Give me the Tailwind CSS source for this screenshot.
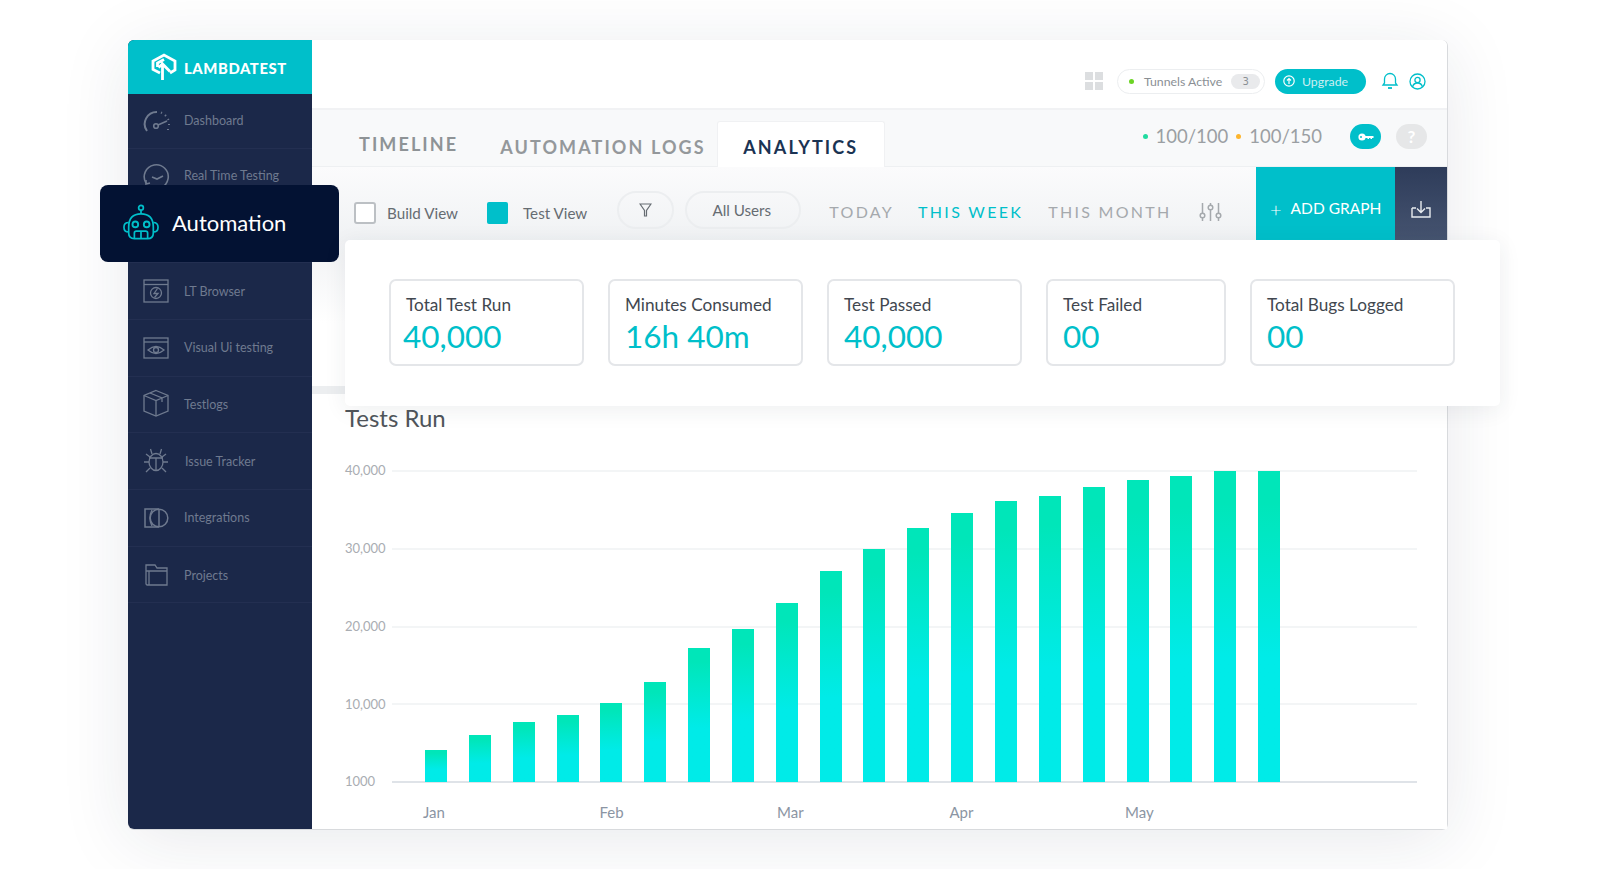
<!DOCTYPE html>
<html lang="en">
<head>
  <meta charset="UTF-8">
  <title>LambdaTest Analytics</title>
  <script src="https://cdn.jsdelivr.net/npm/@tailwindcss/browser@4"></script>
</head>
<body class="bg-white font-['Lato','Open_Sans',sans-serif] overflow-hidden">
<div class="w-[1600px] h-[869px] pt-[40px] pl-[128px]">
  <div class="relative flex w-[1320px] h-[790px] rounded-[6px] bg-white border-r border-b border-[#d8dadd] shadow-[0_10px_70px_rgba(30,40,70,0.10)]">

    <!-- Sidebar -->
    <aside class="w-[184px] shrink-0 bg-[#1b2849] rounded-l-[6px] flex flex-col text-[#6f7a8f] text-[12.5px]">
      <div class="h-[54px] bg-[#00bfca] rounded-tl-[6px] flex items-center pl-[23px] gap-[7px] text-white">
        <svg width="26" height="28" viewBox="0 0 26 28" fill="none" stroke="white" stroke-width="2.800"><path d="M9 20 L2 16.500 V8 L13 2 L24 8 V17 L19 20"/><path d="M6.500 14 V10 L13 6.500"/><path d="M11.500 27 V11 L19 18.500 M11.500 11 L7.500 14.500"/></svg>
        <span class="font-black text-[14.800px] tracking-[0.6px] mt-[2px]">LAMBDATEST</span>
      </div>
      <a class="h-[55px] flex items-center gap-[13px] pl-[15px] border-b border-[#232f51]">
        <svg width="28" height="26" viewBox="0 0 28 26" fill="none" stroke="#6f7a8f" stroke-width="1.6"><path d="M4 23 A12 12 0 0 1 14 4" stroke-width="2"/><path d="M18 4.500 L19 5 M22 7 L23 8 M25 11 L25.500 12 M26 16 L26 17 M25 21 L25 22" stroke-width="2"/><circle cx="13" cy="18" r="2.300"/><path d="M15 17 L24 13"/></svg>
        <span>Dashboard</span>
      </a>
      <a class="h-[57px] flex items-center gap-[13px] pl-[15px] border-b border-[#232f51]">
        <svg width="28" height="28" viewBox="0 0 28 28" fill="none" stroke="#6f7a8f" stroke-width="1.6"><path d="M3 20 A12 12 0 1 1 7 24"/><path d="M3 17 L3 21 L7 20"/><path d="M9 14 L14 16 L20 13"/></svg>
        <span class="mb-[2px]">Real Time Testing</span>
      </a>
      <div class="h-[57px] border-b border-[#232f51]"></div>
      <a class="h-[57px] flex items-center gap-[15px] pl-[15px] border-b border-[#232f51]">
        <svg width="26" height="26" viewBox="0 0 26 26" fill="none" stroke="#6f7a8f" stroke-width="1.300"><rect x="1" y="2" width="24" height="22"/><path d="M1 6.500 H25"/><circle cx="13" cy="15" r="5.500"/><path d="M14.500 10.500 L11 15.500 H15 L11.500 19.500"/></svg>
        <span class="mt-[2px]">LT Browser</span>
      </a>
      <a class="h-[57px] flex items-center gap-[15px] pl-[15px] border-b border-[#232f51]">
        <svg width="26" height="22" viewBox="0 0 26 22" fill="none" stroke="#6f7a8f" stroke-width="1.300"><rect x="1" y="1" width="24" height="20"/><path d="M1 5 H25"/><path d="M5 13 Q13 6 21 13 Q13 20 5 13Z"/><circle cx="13" cy="13" r="2.500"/></svg>
        <span>Visual Ui testing</span>
      </a>
      <a class="h-[56px] flex items-center gap-[15px] pl-[15px] border-b border-[#232f51]">
        <svg class="mb-[3px]" width="26" height="28" viewBox="0 0 26 28" fill="none" stroke="#6f7a8f" stroke-width="1.300"><path d="M13 1.500 L25 6.500 V22 L13 27 L1 22 V6.500Z"/><path d="M1 6.500 L13 11.500 L25 6.500 M13 11.500 V27 M7 4 L19 9 V13"/></svg>
        <span class="mt-[2px]">Testlogs</span>
      </a>
      <a class="h-[57px] flex items-center gap-[16px] pl-[15px] border-b border-[#232f51]">
        <svg class="mb-[3px]" width="26" height="26" viewBox="0 0 26 26" fill="none" stroke="#6f7a8f" stroke-width="1.300"><ellipse cx="13" cy="15" rx="7" ry="8.500"/><path d="M13 11 V23 M6 11 H20 M9 7 L7.500 2 M17 7 L18.500 2 M6 15 H1 M20 15 H25 M7 21 L3 25 M19 21 L23 25 M7 10 L3 7 M19 10 L23 7"/></svg>
        <span class="mt-[2px]">Issue Tracker</span>
      </a>
      <a class="h-[57px] flex items-center gap-[15px] pl-[15px] border-b border-[#232f51]">
        <svg width="26" height="20" viewBox="0 0 26 20" fill="none" stroke="#6f7a8f" stroke-width="1.500"><path d="M16 1 H2 V19 H16"/><circle cx="16" cy="10" r="8.800"/><path d="M9 2 Q5 10 9 18 M16 1 V19"/></svg>
        <span>Integrations</span>
      </a>
      <a class="h-[56px] flex items-center gap-[15px] pl-[15px] border-b border-[#232f51]">
        <svg width="26" height="24" viewBox="0 0 26 24" fill="none" stroke="#6f7a8f" stroke-width="1.300"><path d="M3 21 V2 H12 L14 5 H24 V22 H4 Z"/><path d="M3 8 H24 M6 8 V22"/></svg>
        <span class="mt-[4px]">Projects</span>
      </a>
    </aside>

    <!-- Main -->
    <main class="flex-1 flex flex-col min-w-0">
      <div class="h-[70px] shrink-0 bg-white rounded-tr-[6px] border-b-2 border-[#f1f2f4] flex items-center justify-end pt-[14px] pr-[21px]">
        <svg width="18" height="18" viewBox="0 0 18 18" fill="#dcdee0"><rect width="8" height="8"/><rect x="10" width="8" height="8"/><rect y="10" width="8" height="8"/><rect x="10" y="10" width="8" height="8"/></svg>
        <div class="ml-[14px] w-[148px] h-[25px] rounded-full border border-[#eceef0] flex items-center pl-[11px] text-[12.300px] text-[#8a8f94]">
          <span class="w-[5px] h-[5px] rounded-full bg-[#6bd424]"></span>
          <span class="ml-[10px] mt-[2px]">Tunnels Active</span>
          <span class="ml-[9px] w-[29px] h-[15px] rounded-full bg-[#e9eaec] text-[10px] text-center leading-[15px] font-['DejaVu_Sans']">3</span>
        </div>
        <div class="ml-[10px] w-[91px] h-[25px] rounded-full bg-[#00bfca] flex items-center pl-[8px] text-[12.300px] text-[#cdeff2]">
          <svg width="12" height="12" viewBox="0 0 12 12" fill="none" stroke="white" stroke-width="1.200"><circle cx="6" cy="6" r="5.200"/><path d="M6 9 V3.500 M4 5.500 L6 3.500 L8 5.500"/></svg>
          <span class="ml-[7px] mt-[2px]">Upgrade</span>
        </div>
        <svg class="ml-[15px]" width="18" height="18" viewBox="0 0 18 18" fill="none" stroke="#00bfca" stroke-width="1.300"><path d="M2 13 H16 L14.500 11 V7 A5.500 5.500 0 0 0 3.500 7 V11Z"/><path d="M7 16 H11" stroke-width="1.800"/><path d="M9 1 V2"/></svg>
        <svg class="ml-[10px]" width="17" height="17" viewBox="0 0 17 17" fill="none" stroke="#00bfca" stroke-width="1.300"><circle cx="8.500" cy="8.500" r="7.500"/><circle cx="8.500" cy="7" r="2.600"/><path d="M3.500 14 Q4.500 10 8.500 10 Q12.500 10 13.500 14"/></svg>
      </div>

      <div class="h-[57px] shrink-0 bg-[#f8f9fa] flex items-end border-b border-[#eef0f2] pl-[47px] pr-[20px]">
        <span class="font-bold text-[18px] tracking-[2.100px] text-[#8e9396] self-start mt-[21px]">TIMELINE</span>
        <span class="ml-[42px] font-bold text-[18px] tracking-[2.100px] text-[#94989b] self-start mt-[24px]">AUTOMATION LOGS</span>
        <span class="ml-[11px] w-[168px] h-[46px] bg-white rounded-t-[3px] border border-b-0 border-[#f0f1f3] pt-[6px] font-bold text-[18px] tracking-[2.100px] text-[#1a3353] flex items-center justify-center mb-[-1px]">ANALYTICS</span>
        <div class="ml-auto self-start mt-[13px] flex items-center text-[18.500px] text-[#9b9fa3]">
          <span class="w-[5px] h-[5px] rounded-full bg-[#21dba0]"></span>
          <span class="ml-[8px]">100/100</span>
          <span class="ml-[8px] w-[5px] h-[5px] rounded-full bg-[#fdb52e]"></span>
          <span class="ml-[8px]">100/150</span>
          <span class="ml-[28px] w-[31px] h-[25px] rounded-full bg-[#00bfca] flex items-center justify-center">
            <svg width="16" height="8" viewBox="0 0 16 8" fill="white"><circle cx="4" cy="4" r="3.600"/><path d="M6 3 H15.500 V5 H14 V6 H12.500 V5 H11 V6 H9.500 V5 H6Z"/><circle cx="3" cy="4" r="1" fill="#00bfca"/></svg>
          </span>
          <span class="ml-[15px] w-[31px] h-[25px] rounded-full bg-[#e6e7e8] text-white text-[17px] font-bold flex items-center justify-center">?</span>
        </div>
      </div>

      <div class="h-[74px] shrink-0 bg-linear-to-b from-[#fbfbfc] to-[#f0f2f4] flex text-[15.200px] text-[#666c72]">
        <div class="flex items-start pl-[42px] pt-[35px]">
          <span class="w-[22px] h-[22px] rounded-[3px] border-2 border-[#bcc0c4] bg-white"></span>
          <span class="ml-[11px]">Build View</span>
          <span class="ml-[29px] w-[21px] h-[22px] rounded-[2px] bg-[#00bfca]"></span>
          <span class="ml-[15px]">Test View</span>
        </div>
        <div class="flex items-start pt-[24px]">
          <span class="ml-[30px] w-[57px] h-[38px] rounded-full border-2 border-[#eceef0] flex items-center justify-center">
            <svg width="13" height="14" viewBox="0 0 13 14" fill="none" stroke="#666c72" stroke-width="1.200"><path d="M1 1 H12 L7.500 7.500 V13 H5.500 V7.500Z"/></svg>
          </span>
          <span class="ml-[11px] w-[116px] h-[38px] rounded-full border-2 border-[#eceef0] flex items-center justify-center pr-[3px] text-[15.200px]">All Users</span>
        </div>
        <div class="flex items-start pt-[33px] text-[16px] tracking-[2.300px] text-[#a5a9ad]">
          <span class="ml-[28px]">TODAY</span>
          <span class="ml-[24px] text-[#00bfca]">THIS WEEK</span>
          <span class="ml-[25px]">THIS MONTH</span>
          <svg class="ml-[27px] mt-[2px]" width="23" height="20" viewBox="0 0 23 20" fill="none" stroke="#a5a9ad" stroke-width="1.500"><path d="M3.500 1 V11 M3.500 16 V19 M11.500 1 V3 M11.500 8 V19 M19.500 1 V11 M19.500 16 V19"/><circle cx="3.500" cy="13.500" r="2.300"/><circle cx="11.500" cy="5.500" r="2.300"/><circle cx="19.500" cy="13.500" r="2.300"/></svg>
        </div>
        <div class="ml-auto flex">
          <button class="w-[139px] bg-[#00bfca] text-white text-[15.500px] flex items-center pl-[14px] pt-[9px]"><span class="text-[20px] font-light mr-[9px]">+</span>ADD GRAPH</button>
          <button class="w-[52px] pt-[9px] bg-linear-to-b from-[#2e3c5a] to-[#465470] flex items-center justify-center">
            <svg width="20" height="18" viewBox="0 0 20 18" fill="none" stroke="#e8ecef" stroke-width="1.400"><path d="M1 8 V17 H19 V8 H15 M5 8 H1"/><path d="M10 1 V12 M6 8.500 L10 12.500 L14 8.500"/></svg>
          </button>
        </div>
      </div>

      <div class="flex-1 flex flex-col bg-linear-to-b from-[#f1f2f4] via-white via-[14%] to-white pl-[33px] pr-[30px] relative">
        <div class="absolute left-0 top-[145px] w-[33px] h-[8px] bg-[#eceef0]"></div>
        <div class="mt-[163px] h-[27px] text-[24px] leading-[27px] text-[#50555b]">Tests Run</div>
        <div class="mt-[32px] grid h-[327px] text-[13px] text-[#a9adb2]">
          <div class="col-start-1 row-start-1 flex flex-col justify-between">
            <div class="h-[16px] flex items-center"><span class="w-[47px]">40,000</span><span class="flex-1 h-[2px] bg-[#f3f5f6]"></span></div>
            <div class="h-[16px] flex items-center"><span class="w-[47px]">30,000</span><span class="flex-1 h-[2px] bg-[#f3f5f6]"></span></div>
            <div class="h-[16px] flex items-center"><span class="w-[47px]">20,000</span><span class="flex-1 h-[2px] bg-[#f3f5f6]"></span></div>
            <div class="h-[16px] flex items-center"><span class="w-[47px]">10,000</span><span class="flex-1 h-[2px] bg-[#f3f5f6]"></span></div>
            <div class="h-[16px] flex items-center"><span class="w-[47px]">1000</span><span class="flex-1 h-[2px] bg-[#dfe3e8]"></span></div>
          </div>
          <div id="bars" class="col-start-1 row-start-1 flex items-end gap-[21.85px] pl-[80px] pb-[8px]"></div>
        </div>
        <div class="mt-[11px] flex pl-[78px] text-[15px] text-[#8b95a3]">
          <span class="w-[176.5px]">Jan</span><span class="w-[177.5px]">Feb</span><span class="w-[172.5px]">Mar</span><span class="w-[175.5px]">Apr</span><span>May</span>
        </div>
      </div>
    </main>

    <!-- Automation card, sits over the sidebar -->
    <div class="absolute left-[-28px] top-[145px] w-[239px] h-[77px] rounded-[8px] bg-[#031233] flex items-center pl-[23px] pb-[2px] text-white text-[22px]">
      <svg width="36" height="37" viewBox="0 0 38 38" fill="none" stroke="#00bfca" stroke-width="1.800"><circle cx="19" cy="3.500" r="2.500"/><path d="M19 6 V10"/><path d="M6 24 Q6 10 19 10 Q32 10 32 24 V30 Q32 36 26 36 H12 Q6 36 6 30Z"/><circle cx="13" cy="21" r="3" stroke-width="2"/><circle cx="25" cy="21" r="3" stroke-width="2"/><path d="M6 19 Q1 19 1 24 Q1 29 6 29 M32 19 Q37 19 37 24 Q37 29 32 29"/><path d="M12 36 V30 Q12 28 14 28 H24 Q26 28 26 30 V36 M19 28 V36"/></svg>
      <span class="ml-[13px]">Automation</span>
    </div>

    <!-- Stat panel, overlaps the chart area and runs past the window -->
    <div class="absolute left-[217px] top-[200px] w-[1155px] h-[166px] rounded-[5px] bg-white shadow-[0_4px_22px_rgba(40,50,70,0.08)] flex gap-[24px] pl-[44px] pt-[39px] text-[17.200px] text-[#41474f]">
      <div class="w-[195px] h-[87px] rounded-[7px] border-2 border-[#e4e6e9] pl-[15px] pt-[11px]"><div>Total Test Run</div><div class="text-[31.500px] leading-[36px] text-[#00bfca] ml-[-3px]">40,000</div></div>
      <div class="w-[195px] h-[87px] rounded-[7px] border-2 border-[#e4e6e9] pl-[15px] pt-[11px]"><div>Minutes Consumed</div><div class="text-[31.500px] leading-[36px] text-[#00bfca]">16h 40m</div></div>
      <div class="w-[195px] h-[87px] rounded-[7px] border-2 border-[#e4e6e9] pl-[15px] pt-[11px]"><div>Test Passed</div><div class="text-[31.500px] leading-[36px] text-[#00bfca]">40,000</div></div>
      <div class="w-[180px] h-[87px] rounded-[7px] border-2 border-[#e4e6e9] pl-[15px] pt-[11px]"><div>Test Failed</div><div class="text-[31.500px] leading-[36px] text-[#00bfca]">00</div></div>
      <div class="w-[205px] h-[87px] rounded-[7px] border-2 border-[#e4e6e9] pl-[15px] pt-[11px]"><div>Total Bugs Logged</div><div class="text-[31.500px] leading-[36px] text-[#00bfca]">00</div></div>
    </div>
  </div>
</div>

<script>
// bar tops measured as pixels above the axis
const heights = [32, 47, 60, 67, 79, 100, 134, 153, 179, 211, 233, 254, 269, 281, 286, 295, 302, 306, 311, 311];
const bars = document.getElementById("bars");
heights.forEach(h => {
  const bar = document.createElement("div");
  bar.className = "w-[22px] shrink-0 bg-linear-to-b from-[#00e6b9] from-10% to-[#00ebe8] to-60%";
  bar.style.height = h + "px";
  bars.appendChild(bar);
});
</script>
</body>
</html>
